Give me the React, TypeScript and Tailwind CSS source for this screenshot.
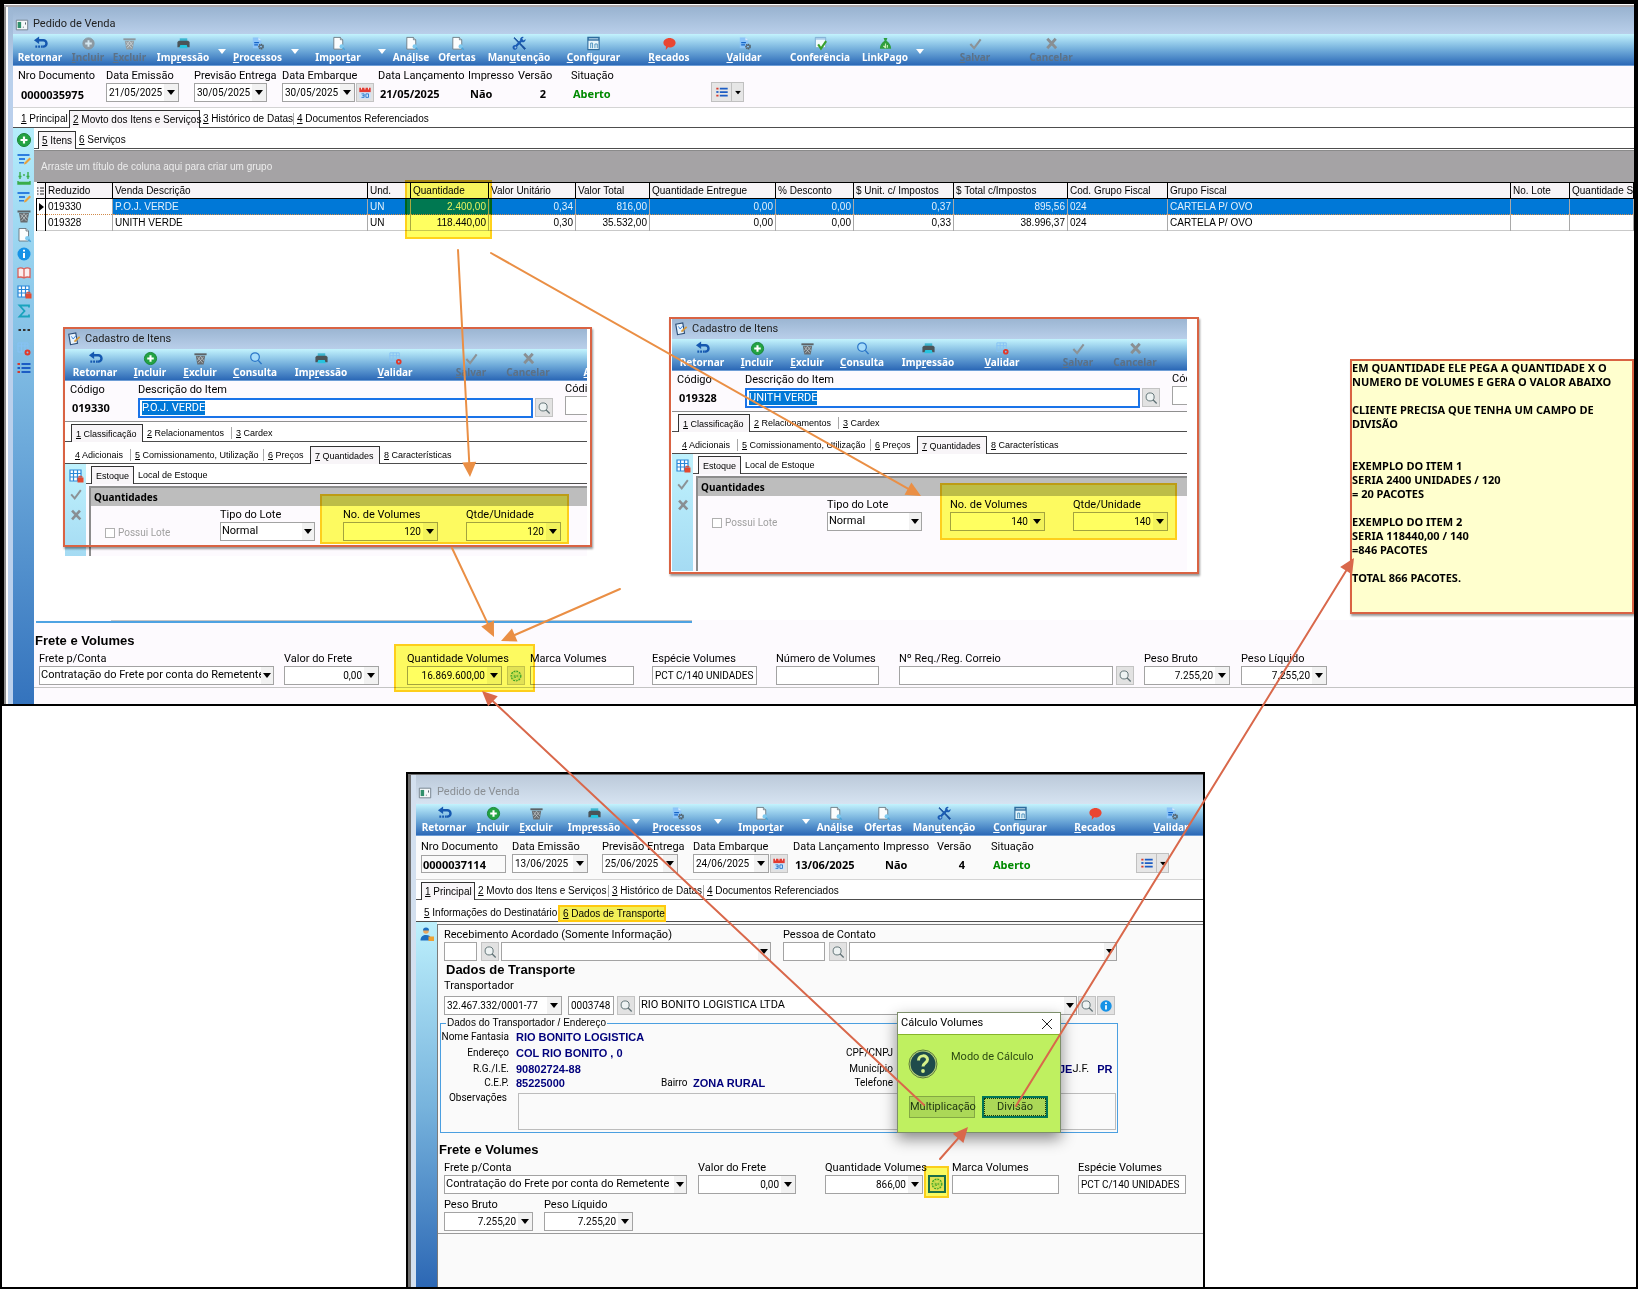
import { Fragment, useId } from 'react';
import type { ReactNode } from 'react';
import clsx from 'clsx';

type IconName =
  | 'undo' | 'plus' | 'plusOff' | 'trash' | 'trashOff' | 'printer' | 'docGear' | 'page' | 'tools' | 'config'
  | 'bubble' | 'docCheck' | 'money' | 'check' | 'cross' | 'search' | 'gridGear' | 'edit' | 'fit' | 'info'
  | 'book' | 'gridLock' | 'sigma' | 'dots' | 'list' | 'calendar' | 'person' | 'lens' | 'app' | 'notepad' | 'gear';

const icons: Record<IconName, ReactNode> = {
  undo: (
    <>
      <path d="M6.5 0.500v8L1 4.500z" fill="#1558b0" />
      <path d="M5 4.500h6a3.200 3.200 0 0 1 0 6.800h-1" fill="none" stroke="#1558b0" strokeWidth="2.600" />
      <path d="M2.500 11.300h7.500" stroke="#1558b0" strokeWidth="2.600" strokeDasharray="2 1" />
    </>
  ),
  plus: (
    <>
      <circle cx="8" cy="8" r="6.5" fill="#23a343" stroke="#178435" />
      <path d="M8 4.5v7M4.5 8h7" stroke="#fff" strokeWidth="2.2" />
    </>
  ),
  plusOff: (
    <>
      <circle cx="8" cy="8" r="6" fill="#8e9ba4" stroke="#87939b" />
      <path d="M8 4.5v7M4.5 8h7" stroke="#d5e8f1" strokeWidth="2" />
    </>
  ),
  trash: (
    <>
      <path d="M1.5 2.5h13v2h-13z" fill="#5c6266" />
      <path d="M3 5h10l-1.6 9.5H4.6z" fill="#676c70" />
      <path d="M4.5 6l6 7M8 5.5l3.5 5M11.5 6l-6 7M8 5.5l-3.3 5" stroke="#c3c9cc" strokeWidth="0.8" />
    </>
  ),
  trashOff: (
    <>
      <path d="M1.5 2.5h13v2h-13z" fill="#8d979d" />
      <path d="M3 5h10l-1.6 9.5H4.6z" fill="#939ca1" />
      <path d="M4.5 6l6 7M8 5.5l3.5 5M11.5 6l-6 7M8 5.5l-3.3 5" stroke="#d0d8dc" strokeWidth="0.8" />
    </>
  ),
  printer: (
    <>
      <path d="M4 2.5h8v4H4z" fill="#3bb5cf" />
      <path d="M1.500 6.500L3 5h10l1.500 1.500V12h-13z" fill="#4b5458" />
      <path d="M4.5 9.5h7l1 3.5h-9z" fill="#27c3de" />
    </>
  ),
  docGear: (
    <>
      <path d="M3 1.5h6l3 3V13H3z" fill="#8cc4f8" />
      <path d="M9 1.5l3 3H9z" fill="#d6ebfd" />
      <path d="M4.5 7h5M4.5 9.5h4" stroke="#1464c8" strokeWidth="1.4" />
      <circle cx="11.8" cy="11.3" r="2.3" fill="none" stroke="#53626c" strokeWidth="1.6" strokeDasharray="1.4 0.5" />
      <circle cx="11.8" cy="11.3" r="1.6" fill="none" stroke="#53626c" />
    </>
  ),
  page: (
    <>
      <path d="M3 1.5h7l2.5 2.5v10H3z" fill="#fbfdfe" stroke="#66747d" strokeWidth="0.9" />
      <path d="M10 1.5V4h2.5" fill="#d7e2e8" stroke="#66747d" strokeWidth="0.8" />
      <circle cx="11.5" cy="11.3" r="2.4" fill="#7fcaf0" />
      <path d="M12.5 12.5l2.2 2.2" stroke="#4ba3d8" strokeWidth="1.6" />
    </>
  ),
  tools: (
    <>
      <path d="M2 2.2l8.5 9 2.8 3.2 1.2-1.2-3-2.9L2.6 1.6z" fill="#174f9d" stroke="#174f9d" strokeWidth="0.8" />
      <path d="M14.5 3.2a3 3 0 0 1-4.2 3.2L5.6 11.2a2.6 2.6 0 1 1-1.8-1.6l4.9-5A3 3 0 0 1 12.6 1l-1.8 2 1.5 1.7z" fill="#1b5cb4" />
      <circle cx="3.7" cy="12.2" r="1" fill="#9bc4e8" />
    </>
  ),
  config: (
    <>
      <path d="M2 1.5h12v13H2z" fill="#e8f6fb" stroke="#2e6c9e" strokeWidth="1.2" />
      <path d="M2 1.5h12V5H2z" fill="#2e6c9e" />
      <path d="M3 3h10" stroke="#d0e8f5" />
      <path d="M5 13V7.5h2V13M9.5 13V8.5H12V13" fill="none" stroke="#4a90bd" />
    </>
  ),
  bubble: <path d="M8 2c3.6 0 6.5 2.3 6.5 5.1S11.600 12.200 8 12.200c-.5 0-1 0-1.500-.1L4 15l.2-3.800C2.600 10.300 1.500 8.800 1.500 7.100 1.500 4.300 4.400 2 8 2z" fill="#ea4632" />,
  docCheck: (
    <>
      <path d="M2.5 1.5h11v11h-11z" fill="#f3fafd" stroke="#73a8cf" />
      <path d="M3 2h10v2H3z" fill="#a9cdea" />
      <path d="M5.500 9l3 4.500 5.500-8" fill="none" stroke="#3aa02c" strokeWidth="2.200" />
    </>
  ),
  money: (
    <>
      <path d="M6 2h4l-1 3c3 2 5 5 5 8.500H2C2 10 4 7 7 5z" fill="#2f9e3d" />
      <path d="M5.500 11h1.500v1.500M8 8v5M10 9.500v3" stroke="#c9f0b8" strokeWidth="1.200" />
    </>
  ),
  check: <path d="M2.500 8.500l4 4.500 7-9.500" fill="none" stroke="#8c9296" strokeWidth="2.200" />,
  cross: <path d="M3.500 3l9.500 10M12.500 3l-9 10" fill="none" stroke="#898f93" strokeWidth="3" />,
  search: (
    <>
      <circle cx="7.500" cy="6.500" r="4.600" fill="#a6dcfa" stroke="#2b76c8" strokeWidth="1.300" />
      <path d="M11 10l3.500 4" stroke="#2b76c8" strokeWidth="1.600" />
    </>
  ),
  gridGear: (
    <>
      <path d="M2 2h10v9H2zM2 5h10M5.500 2v9M9 2v9" fill="none" stroke="#86c2f4" strokeWidth="1" />
      <circle cx="11.500" cy="11.500" r="2" fill="none" stroke="#e2392b" strokeWidth="2" />
    </>
  ),
  edit: (
    <>
      <path d="M1.500 3h12v2h-12zM3 7h6v2H3zM3 11h5v1.500H3z" fill="#2d7fe0" />
      <path d="M13.500 6.500l1.500 1.500-5 5-2 .5.500-2z" fill="#e9a13c" />
    </>
  ),
  fit: (
    <>
      <path d="M2 11v3h12v-3M2 12.500h12" fill="none" stroke="#39ad4a" strokeWidth="1.400" />
      <path d="M4 2v7M12 2v7M2.500 6.500h3M10.500 6.500h3M8 4v2" stroke="#39ad4a" strokeWidth="1.400" />
    </>
  ),
  info: (
    <>
      <circle cx="8" cy="8" r="6.500" fill="#1692e6" />
      <path d="M8 7v5M8 3.800v1.800" stroke="#fff" strokeWidth="2" />
    </>
  ),
  book: <path d="M2 3.500c2-.8 4-.8 6 .5 2-1.300 4-1.300 6-.5v9c-2-.8-4-.6-6 .5-2-1.100-4-1.300-6-.5zM8 4v9" fill="#fbeeee" stroke="#d9605a" strokeWidth="1.300" />,
  gridLock: (
    <>
      <path d="M2 2h11v11H2z" fill="#fff" />
      <path d="M2 2h11v11H2zM2 5.500h11M2 9h11M5.500 2v11M9.500 2v11" fill="none" stroke="#2a88d8" strokeWidth="1.200" />
      <path d="M9.500 9.500h6v5h-6z" fill="#e4492f" />
      <path d="M11 9.500V8.300h3v1.200" fill="none" stroke="#e4492f" />
    </>
  ),
  sigma: <path d="M13 4.500V2.500H3.500L8.500 8l-5 5.500H13v-2" fill="none" stroke="#1aa3bd" strokeWidth="1.800" />,
  dots: <path d="M2.500 8h2.500M7 8h2.500M11.500 8h2.500" stroke="#333" strokeWidth="2.200" />,
  list: (
    <>
      <path d="M5.500 4h9M5.500 8h9M5.500 12h9" stroke="#1c5cc4" strokeWidth="2" />
      <path d="M1.500 4h2.500M1.500 12h2.500" stroke="#d63a2e" strokeWidth="2" />
      <path d="M1.500 8h2.500" stroke="#1c5cc4" strokeWidth="2" />
    </>
  ),
  calendar: (
    <>
      <path d="M1.500 2h13v12.500h-13z" fill="#cfe4fa" />
      <path d="M1.500 2h13v5h-13z" fill="#e33a30" />
      <path d="M4 1v3M8 1v3M12 1v3" stroke="#f4e4e4" strokeWidth="1.200" />
      <path d="M4 9h3v4H4M5 11h2M9 9h3v4H9z" fill="none" stroke="#2474c8" />
    </>
  ),
  person: (
    <>
      <circle cx="7" cy="4" r="2.800" fill="#e8a760" />
      <path d="M4 3.500a3 3 0 0 1 6 0z" fill="#1c6ec0" />
      <path d="M1.500 13.500c0-4 2.500-5.500 5.500-5.500s4 1 5 3v2.500z" fill="#1c6ec0" />
      <path d="M9.500 9.500h5.500v4.500H9.500z" fill="#eea134" />
    </>
  ),
  lens: (
    <>
      <circle cx="7" cy="6.800" r="4.600" fill="#eef3f3" stroke="#5f7175" strokeWidth="1.100" />
      <path d="M10.500 10.300l4 4" stroke="#5f7175" strokeWidth="1.400" />
    </>
  ),
  app: (
    <>
      <path d="M1.500 2.500h13v11h-13z" fill="#f5f8fa" stroke="#6b7a86" />
      <path d="M3 4.500h4v7H3z" fill="#2f8f6b" />
      <path d="M9 10.500h1M12 5v2.500" stroke="#44525c" />
    </>
  ),
  notepad: (
    <>
      <path d="M2 2.500L10 1l2 12-8 1.500z" fill="#e9f3fb" stroke="#2b4d78" strokeWidth="1.300" />
      <path d="M5 5l2 3 3-3.500" fill="none" stroke="#2d7fe0" />
      <path d="M14.500 5.500l-6 5.500" stroke="#d99a3a" strokeWidth="2" />
    </>
  ),
  gear: (
    <>
      <circle cx="8" cy="8" r="5.500" fill="none" stroke="#3aa35e" strokeWidth="1.500" strokeDasharray="2.200 1" />
      <circle cx="8" cy="8" r="4" fill="none" stroke="#8fd3a3" strokeWidth="0.800" />
      <path d="M6 6.500v3h2v-3M10 6.500v3" fill="none" stroke="#3aa35e" />
    </>
  ),
};

function Icon({ name, className = 'size-4' }: { name: IconName; className?: string }) {
  return <svg viewBox="0 0 16 16" className={clsx('shrink-0', className)} aria-hidden="true">{icons[name]}</svg>;
}

function Arrow({ className = 'text-black' }: { className?: string }) {
  return (
    <svg viewBox="0 0 8 5" className={clsx('h-[5px] w-2 shrink-0', className)} aria-hidden="true">
      <path d="M0 0h8L4 5z" fill="currentColor" />
    </svg>
  );
}

// "&" marks the keyboard mnemonic, as in the desktop forms
function Mnemonic({ text }: { text: string }) {
  const at = text.indexOf('&');
  if (at < 0) return <>{text}</>;
  return (
    <>
      {text.slice(0, at)}
      <span className="underline underline-offset-1">{text[at + 1]}</span>
      {text.slice(at + 2)}
    </>
  );
}

type Tool = { label?: string; icon?: IconName; w: string; off?: boolean };

function Toolbar({ tools }: { tools: Tool[] }) {
  return (
    <div className="flex h-8 shrink-0 overflow-hidden border-b border-[#6f9ed6] bg-linear-to-b from-[#c3f3fd] via-[#73aedb] to-[#2b68b6]">
      {tools.map((t, i) =>
        t.label ? (
          <button
            key={i}
            disabled={t.off}
            className={clsx(
              "flex shrink-0 flex-col items-center pt-[2px] font-['Noto_Sans',sans-serif] text-[10px] leading-3 font-bold whitespace-nowrap",
              t.off ? 'text-[#5c7186]' : 'text-white',
              t.w,
            )}
          >
            {t.icon ? <Icon name={t.icon} className="size-[15px]" /> : <span className="h-[15px]" />}
            <span><Mnemonic text={t.label} /></span>
          </button>
        ) : (
          <button key={i} aria-label="Mais opções" className={clsx('flex shrink-0 items-center justify-center pt-1', t.w)}>
            <Arrow className="text-white" />
          </button>
        ),
      )}
    </div>
  );
}

type Tab = { label: string; w: string; active?: boolean; sep?: boolean; marked?: boolean };

function Tabs({ tabs, className, small }: { tabs: Tab[]; className?: string; small?: boolean }) {
  return (
    <div
      role="tablist"
      className={clsx(
        "flex shrink-0 items-end border-b border-[#4d4d4d] bg-white font-['Liberation_Sans',sans-serif] leading-3",
        small ? 'text-[9px]' : 'text-[10px]',
        className,
      )}
    >
      {tabs.map((t) => (
        <button
          key={t.label}
          role="tab"
          aria-selected={!!t.active}
          className={clsx(
            'relative h-[17px] shrink-0 text-left whitespace-nowrap',
            small ? 'pl-1' : 'pl-[3px]',
            t.active && !t.marked && '-mb-px h-[18px] border-x border-t border-[#333] bg-[#f8f5f8]',
            t.marked && '-mb-px h-5 border-2 border-[#ffc90e] bg-[#f2ef58]',
            t.w,
          )}
        >
          <Mnemonic text={t.label} />
          {t.sep && <span className="absolute top-[3px] right-0 h-3 w-px bg-[#a8a8a8]" />}
        </button>
      ))}
    </div>
  );
}

const box = 'h-[19px] border border-[#a3a3a3] bg-white';

function IconButton({ icon, label, className }: { icon: IconName; label: string; className?: string }) {
  return (
    <button aria-label={label} className={clsx('flex h-[19px] w-[18px] shrink-0 items-center justify-center border border-[#c3c3c3] bg-[#e2e2e2]', className)}>
      <Icon name={icon} className="size-[14px]" />
    </button>
  );
}

type Kind = 'text' | 'select' | 'spin' | 'date';
type FieldProps = { label: string; w: string; boxW: string; value?: string; kind?: Kind; extra?: ReactNode };

// One caption above one control; w is the column, boxW the control itself
function Field({ label, w, boxW, value = '', kind = 'text', extra }: FieldProps) {
  const id = useId();
  return (
    <div className={clsx('shrink-0', w)}>
      <label htmlFor={id} className="block h-[14px] leading-[14px] whitespace-nowrap">{label}</label>
      <div className="flex">
        <Control id={id} kind={kind} value={value} boxW={boxW} />
        {extra}
      </div>
    </div>
  );
}

function Control({ id, kind, value, boxW, label }: { id?: string; kind: Kind; value: string; boxW: string; label?: string }) {
  if (kind === 'select') {
    return (
      <div className={clsx('relative flex shrink-0 items-center', box, boxW)}>
        <select id={id} aria-label={label} defaultValue={value} className="h-full w-full appearance-none bg-transparent pl-px outline-none">
          <option value={value}>{value}</option>
        </select>
        <span className="pointer-events-none absolute inset-y-0 right-0 flex w-3 items-center justify-center bg-[#f2f2f2]">
          <Arrow />
        </span>
      </div>
    );
  }
  if (kind === 'text') {
    return <input id={id} aria-label={label} defaultValue={value} className={clsx('shrink-0 px-[2px] text-[10px] outline-none', box, boxW)} />;
  }
  return (
    <div className={clsx('flex shrink-0', box, boxW)}>
      <input
        id={id}
        aria-label={label}
        defaultValue={value}
        className={clsx('min-w-0 flex-1 bg-transparent px-[2px] text-[10px] outline-none', kind === 'spin' && 'text-right')}
      />
      <button aria-label="Abrir" className="flex w-[14px] shrink-0 items-center justify-center bg-[#f2f2f2]"><Arrow /></button>
    </div>
  );
}

const orderTop: Tool[] = [
  { label: 'Retornar', icon: 'undo', w: 'w-[54px]' },
  { label: '&Incluir', icon: 'plusOff', w: 'w-[42px]', off: true },
  { label: '&Excluir', icon: 'trashOff', w: 'w-[41px]', off: true },
  { label: 'Imp&ressão', icon: 'printer', w: 'w-[66px]' },
  { w: 'w-[12px]' },
  { label: '&Processos', icon: 'docGear', w: 'w-[59px]' },
  { w: 'w-[16px]' },
  { label: 'Impor&tar', icon: 'page', w: 'w-[70px]' },
  { w: 'w-[18px]' },
  { label: 'Aná&lise', icon: 'page', w: 'w-[40px]' },
  { label: 'Ofertas', icon: 'page', w: 'w-[52px]' },
  { label: 'Man&utenção', icon: 'tools', w: 'w-[72px]' },
  { label: '&Configurar', icon: 'config', w: 'w-[77px]' },
  { label: '&Recados', icon: 'bubble', w: 'w-[74px]' },
  { label: '&Validar', icon: 'docGear', w: 'w-[76px]' },
  { label: 'Conferência', icon: 'docCheck', w: 'w-[76px]' },
  { label: 'LinkPago', icon: 'money', w: 'w-[54px]' },
  { w: 'w-[16px]' },
  { label: '&Salvar', icon: 'check', w: 'w-[94px]', off: true },
  { label: 'Cancelar', icon: 'cross', w: 'w-[58px]', off: true },
];

const orderBottom: Tool[] = [
  { label: 'Retornar', icon: 'undo', w: 'w-[56px]' },
  { label: '&Incluir', icon: 'plus', w: 'w-[42px]' },
  { label: '&Excluir', icon: 'trash', w: 'w-[44px]' },
  { label: 'Imp&ressão', icon: 'printer', w: 'w-[72px]' },
  { w: 'w-[12px]' },
  { label: '&Processos', icon: 'docGear', w: 'w-[70px]' },
  { w: 'w-[12px]' },
  { label: 'Impor&tar', icon: 'page', w: 'w-[74px]' },
  { w: 'w-[15px]' },
  { label: 'Aná&lise', icon: 'page', w: 'w-[44px]' },
  { label: 'Ofertas', icon: 'page', w: 'w-[52px]' },
  { label: 'Man&utenção', icon: 'tools', w: 'w-[70px]' },
  { label: '&Configurar', icon: 'config', w: 'w-[82px]' },
  { label: '&Recados', icon: 'bubble', w: 'w-[68px]' },
  { label: '&Validar', icon: 'docGear', w: 'w-[84px]' },
];

const itemTools: Tool[] = [
  { label: 'Retornar', icon: 'undo', w: 'w-[60px]' },
  { label: '&Incluir', icon: 'plus', w: 'w-[50px]' },
  { label: '&Excluir', icon: 'trash', w: 'w-[50px]' },
  { label: '&Consulta', icon: 'search', w: 'w-[60px]' },
  { label: 'Imp&ressão', icon: 'printer', w: 'w-[72px]' },
  { label: '&Validar', icon: 'gridGear', w: 'w-[76px]' },
  { label: '&Salvar', icon: 'check', w: 'w-[76px]', off: true },
  { label: 'Cancelar', icon: 'cross', w: 'w-[38px]', off: true },
  { label: '&A', w: 'w-[80px]' },
];

type HeaderProps = {
  slots: string[];
  dateW: string;
  numero: ReactNode;
  datas: [string, string, string];
  lancamento: string;
  versao: string;
  className: string;
};

function OrderHeader({ slots, dateW, numero, datas, lancamento, versao, className }: HeaderProps) {
  const bold = "h-[19px] font-['Noto_Sans',sans-serif] text-[11px] leading-[22px] font-bold whitespace-nowrap";
  return (
    <div className={clsx('flex border-b border-[#d4d4d4] pl-[5px]', className)}>
      <div className={clsx('shrink-0', slots[0])}>
        <div className="h-[14px] leading-[14px]">Nro Documento</div>
        {numero}
      </div>
      <Field label="Data Emissão" kind="date" value={datas[0]} w={slots[1]} boxW={dateW} />
      <Field label="Previsão Entrega" kind="date" value={datas[1]} w={slots[2]} boxW={dateW} />
      <Field
        label="Data Embarque"
        kind="date"
        value={datas[2]}
        w={slots[3]}
        boxW={dateW}
        extra={<IconButton icon="calendar" label="Calendário" className="ml-px" />}
      />
      <div className={clsx('shrink-0', slots[4])}>
        <div className="h-[14px] leading-[14px] whitespace-nowrap">Data Lançamento</div>
        <div className={clsx(bold, 'pl-[2px]')}>{lancamento}</div>
      </div>
      <div className={clsx('shrink-0', slots[5])}>
        <div className="h-[14px] leading-[14px]">Impresso</div>
        <div className={clsx(bold, 'pl-[2px]')}>Não</div>
      </div>
      <div className={clsx('shrink-0', slots[6])}>
        <div className="h-[14px] leading-[14px]">Versão</div>
        <div className={clsx(bold, 'w-[28px] text-right')}>{versao}</div>
      </div>
      <div className={clsx('shrink-0', slots[7])}>
        <div className="h-[14px] leading-[14px]">Situação</div>
        <div className={clsx(bold, 'pl-[2px] text-[#008a00]')}>Aberto</div>
      </div>
      <div className="mt-[13px] flex h-5">
        <button aria-label="Lista" className="flex w-[21px] items-center justify-center border border-[#c0c0c0] bg-[#e6e6e6]"><Icon name="list" className="size-[14px]" /></button>
        <button aria-label="Opções" className="flex w-[12px] items-center justify-center border border-l-0 border-[#c0c0c0] bg-[#e6e6e6]"><Arrow className="scale-75 text-black" /></button>
      </div>
    </div>
  );
}

const columns = [
  { title: 'Reduzido', w: 'w-[67px]', cells: ['019330', '019328'] },
  { title: 'Venda Descrição', w: 'w-[255px]', cells: ['P.O.J. VERDE', 'UNITH VERDE'] },
  { title: 'Und.', w: 'w-[43px]', cells: ['UN', 'UN'] },
  { title: 'Quantidade', w: 'w-[78px]', num: true, cells: ['2.400,00', '118.440,00'] },
  { title: 'Valor Unitário', w: 'w-[87px]', num: true, cells: ['0,34', '0,30'] },
  { title: 'Valor Total', w: 'w-[74px]', num: true, cells: ['816,00', '35.532,00'] },
  { title: 'Quantidade Entregue', w: 'w-[126px]', num: true, cells: ['0,00', '0,00'] },
  { title: '% Desconto', w: 'w-[78px]', num: true, cells: ['0,00', '0,00'] },
  { title: '$ Unit. c/ Impostos', w: 'w-[100px]', num: true, cells: ['0,37', '0,33'] },
  { title: '$ Total c/Impostos', w: 'w-[114px]', num: true, cells: ['895,56', '38.996,37'] },
  { title: 'Cod. Grupo Fiscal', w: 'w-[100px]', cells: ['024', '024'] },
  { title: 'Grupo Fiscal', w: 'w-[343px]', cells: ['CARTELA P/ OVO', 'CARTELA P/ OVO'] },
  { title: 'No. Lote', w: 'w-[59px]', cells: ['', ''] },
  { title: 'Quantidade S', w: 'w-auto', cells: ['', ''] },
];

function ItemsTable() {
  return (
    <table className="w-full table-fixed border-collapse font-['Liberation_Sans',sans-serif] text-[10px] leading-[15px]">
      <thead>
        <tr className="h-4 border-y border-black bg-[#f7f4f7]">
          <th aria-label="Indicador" className="w-[9px] border-r border-black p-0">
            <svg viewBox="0 0 7 8" className="mx-auto h-2 w-[7px]">
              <path d="M0 1h1.500M0 4h1.500M0 7h1.500M3 1h4M3 4h4M3 7h4" stroke="#222" />
            </svg>
          </th>
          {columns.map((c) => (
            <th key={c.title} className={clsx('border-r border-black p-0 pl-[2px] text-left font-normal whitespace-nowrap', c.w)}>{c.title}</th>
          ))}
        </tr>
      </thead>
      <tbody>
        {[0, 1].map((r) => (
          <tr key={r} className={clsx('h-4 border-b', r === 0 ? 'border-dotted border-[#d18b4a] bg-[#0078d7] text-[#e4f1fb]' : 'border-[#c9c9c9]')}>
            <td className="border-r border-l border-black bg-white p-0 text-black">
              {r === 0 && <svg viewBox="0 0 5 8" className="mx-auto h-2 w-[5px]"><path d="M0 0v8l5-4z" /></svg>}
            </td>
            {columns.map((c, i) => (
              <td
                key={c.title}
                className={clsx('border-r border-[#a9a9a9] p-0 px-[2px] whitespace-nowrap', c.num && 'text-right', i === 0 && r === 0 && 'bg-white text-black')}
              >
                {c.cells[r]}
              </td>
            ))}
          </tr>
        ))}
      </tbody>
    </table>
  );
}

const sideIcons: IconName[] = ['plus', 'edit', 'fit', 'edit', 'trash', 'page', 'info', 'book', 'gridLock', 'sigma', 'dots', 'gridGear', 'list'];

function OrderWindow() {
  return (
    <section className="border-2 border-black bg-white">
      <div className="h-px bg-white" />
      <div className="h-[2px] bg-[#a9a6a9]" />
      <div className="flex">
        <div className="w-[2px] bg-[#8d8d8d]" />
        <div className="w-[2px] bg-white" />
        <div className="w-[5px] bg-linear-to-b from-[#9cb6d3] to-[#bad0ec] to-10%" />
        <div className="flex min-w-0 flex-1 flex-col">
          <h1 className="flex h-[27px] items-center gap-1 bg-linear-to-b from-[#99b3d0] to-[#b9cfea] pt-2 pl-[2px] text-[#222]">
            <Icon name="app" className="size-[14px]" />
            Pedido de Venda
          </h1>
          <Toolbar tools={orderTop} />
          <OrderHeader
            className="h-[42px] bg-[#fdfafe] pt-[3px]"
            slots={['w-[88px]', 'w-[88px]', 'w-[88px]', 'w-[96px]', 'w-[90px]', 'w-[50px]', 'w-[53px]', 'w-[140px]']}
            dateW="w-[73px]"
            numero={<div className="pl-[3px] font-['Noto_Sans',sans-serif] text-[11px] leading-6 font-bold">0000035975</div>}
            datas={['21/05/2025', '30/05/2025', '30/05/2025']}
            lancamento="21/05/2025"
            versao="2"
          />
          <Tabs
            className="h-5 pl-[5px]"
            tabs={[
              { label: '&1 Principal', w: 'w-[51px]' },
              { label: '&2 Movto dos Itens e Serviços', w: 'w-[131px]', active: true },
              { label: '&3 Histórico de Datas', w: 'w-[94px]', sep: true },
              { label: '&4 Documentos Referenciados', w: 'w-[140px]' },
            ]}
          />
          <div className="flex">
            <nav className="flex w-[21px] shrink-0 flex-col items-center gap-[3px] bg-linear-to-b from-[#b5eefc] to-[#3473bd] pt-1">
              {sideIcons.map((name, i) => (
                <button key={i} aria-label={`Ação ${i + 1}`}><Icon name={name} className="size-4" /></button>
              ))}
            </nav>
            <main className="min-w-0 flex-1">
              <Tabs
                className="h-[21px] pl-1"
                tabs={[
                  { label: '&5 Itens', w: 'w-[38px]', active: true },
                  { label: '&6 Serviços', w: 'w-[60px]' },
                ]}
              />
              <div className="mt-px h-8 border-t border-[#8a8a8a] bg-[#a5a3a5] pt-[8px] pl-[7px] font-['Liberation_Sans',sans-serif] text-[10px] leading-4 text-[#ececec]">
                Arraste um título de coluna aqui para criar um grupo
              </div>
              <div className="h-[438px] overflow-hidden pl-[2px]"><ItemsTable /></div>
              <div className="bg-[#fdfafe] pb-4">
                <div className="ml-[2px] h-[3px] w-[656px] border-b-2 border-[#4ea2e2] pl-[75px]">
                  <div className="h-px bg-[#c6c6c6]" />
                </div>
                <h2 className="mt-[10px] pl-px font-['Liberation_Sans',sans-serif] text-[13px] leading-4 font-bold">Frete e Volumes</h2>
                <div className="mt-[3px] flex border-b border-[#c4c4c4] pb-[2px] pl-[5px]">
                  <Field label="Frete p/Conta" kind="select" value="Contratação do Frete por conta do Remetente" w="w-[245px]" boxW="w-[235px]" />
                  <Field label="Valor do Frete" kind="spin" value="0,00" w="w-[123px]" boxW="w-[95px]" />
                  <Field
                    label="Quantidade Volumes"
                    kind="spin"
                    value="16.869.600,00"
                    w="w-[123px]"
                    boxW="w-[95px]"
                    extra={<IconButton icon="gear" label="Calcular volumes" className="ml-[5px]" />}
                  />
                  <Field label="Marca Volumes" w="w-[122px]" boxW="w-[104px]" />
                  <Field label="Espécie Volumes" value="PCT C/140 UNIDADES" w="w-[124px]" boxW="w-[105px]" />
                  <Field label="Número de Volumes" w="w-[123px]" boxW="w-[103px]" />
                  <Field label="Nº Req./Reg. Correio" w="w-[245px]" boxW="w-[214px]" extra={<IconButton icon="lens" label="Pesquisar" className="ml-[3px]" />} />
                  <Field label="Peso Bruto" kind="spin" value="7.255,20" w="w-[97px]" boxW="w-[86px]" />
                  <Field label="Peso Líquido" kind="spin" value="7.255,20" w="w-[97px]" boxW="w-[86px]" />
                </div>
              </div>
            </main>
          </div>
        </div>
      </div>
    </section>
  );
}

function ItemWindow({ code, name, volumes, className }: { code: string; name: string; volumes: string; className: string }) {
  const id = useId();
  return (
    <section className={clsx('absolute flex flex-col overflow-hidden bg-[#fdfafe]', className)}>
      <h2 className="flex h-[22px] shrink-0 items-center gap-1 bg-linear-to-b from-[#99b3d0] to-[#b9cfea] pt-[2px] pl-[2px] text-[#222]">
        <Icon name="notepad" className="size-[14px]" />
        Cadastro de Itens
      </h2>
      <Toolbar tools={itemTools} />
      <div className="flex h-[41px] shrink-0 border-b border-[#8f8f8f] pt-px pl-[5px]">
        <div className="w-[68px] shrink-0">
          <div className="leading-4">Código</div>
          <div className="pl-[2px] font-['Noto_Sans',sans-serif] text-[11px] leading-5 font-bold">{code}</div>
        </div>
        <div className="w-[427px] shrink-0">
          <label htmlFor={id} className="block leading-4">Descrição do Item</label>
          <div className="flex">
            <div className="flex h-5 w-[395px] items-center border-2 border-[#1a73e8] bg-white px-[2px]">
              <input id={id} defaultValue={name} size={name.length} className="field-sizing-content bg-[#0078d7] leading-[14px] text-white outline-none" />
            </div>
            <IconButton icon="lens" label="Pesquisar" className="ml-[2px]" />
          </div>
        </div>
        <Field label="Código" w="w-[90px]" boxW="w-[80px]" />
      </div>
      <Tabs
        small
        className="h-5 pl-[6px]"
        tabs={[
          { label: '&1 Classificação', w: 'w-[72px]', active: true },
          { label: '&2 Relacionamentos', w: 'w-[89px]', sep: true },
          { label: '&3 Cardex', w: 'w-[60px]' },
        ]}
      />
      <Tabs
        small
        className="h-[22px] pl-[6px]"
        tabs={[
          { label: '&4 Adicionais', w: 'w-[60px]', sep: true },
          { label: '&5 Comissionamento, Utilização', w: 'w-[133px]', sep: true },
          { label: '&6 Preços', w: 'w-[46px]' },
          { label: '&7 Quantidades', w: 'w-[70px]', active: true },
          { label: '&8 Características', w: 'w-[90px]' },
        ]}
      />
      <div className="flex flex-1">
        <nav className="flex w-[21px] shrink-0 flex-col items-center gap-[3px] bg-linear-to-b from-[#bff2fd] to-[#a5dbf3] pt-[4px]">
          <Icon name="gridLock" />
          <Icon name="check" className="size-[14px]" />
          <Icon name="cross" className="mt-1 size-[14px]" />
        </nav>
        <div className="min-w-0 flex-1">
          <Tabs
            small
            className="h-5 pl-[5px]"
            tabs={[
              { label: 'Estoque', w: 'w-[43px]', active: true },
              { label: 'Local de Estoque', w: 'w-[90px]' },
            ]}
          />
          <div className="mt-[2px] ml-[3px] h-full border-t-2 border-l-2 border-[#8c8c8c]">
            <h3 className="h-[18px] bg-[#bdbdbd] pl-[3px] font-['Noto_Sans',sans-serif] text-[10px] leading-[18px] font-bold">Quantidades</h3>
            <div className="flex pt-[2px]">
              <label className="flex w-[129px] shrink-0 items-center gap-[3px] pt-4 pl-[14px] text-[10px] text-[#a0a0a0]">
                <input type="checkbox" disabled className="size-[10px] appearance-none border border-[#b0b0b0] bg-white" />
                Possui Lote
              </label>
              <Field label="Tipo do Lote" kind="select" value="Normal" w="w-[123px]" boxW="w-[95px]" />
              <Field label="No. de Volumes" kind="spin" value={volumes} w="w-[123px]" boxW="w-[95px]" />
              <Field label="Qtde/Unidade" kind="spin" value={volumes} w="w-[123px]" boxW="w-[95px]" />
            </div>
          </div>
        </div>
      </div>
    </section>
  );
}

function AddressRow({ label, value, bairro, bairroValue, right, className, children }: {
  label: string; value: string; bairro?: string; bairroValue?: string; right?: string; className?: string; children?: ReactNode;
}) {
  const strong = "shrink-0 font-['Liberation_Sans',sans-serif] text-[11px] font-bold whitespace-nowrap text-[#00007c]";
  return (
    <div className={clsx('flex h-[14px] leading-[14px]', className)}>
      <span className="w-[68px] shrink-0 text-right whitespace-nowrap">{label}</span>
      <span className={clsx(strong, 'ml-[7px] w-[145px]')}>{value}</span>
      <span className="w-8 shrink-0">{bairro}</span>
      <span className={clsx(strong, 'w-[144px]')}>{bairroValue}</span>
      <span className="w-[56px] shrink-0 text-right">{right}</span>
      {children && <span className={clsx(strong, 'flex pl-[166px]')}>{children}</span>}
    </div>
  );
}

function TransportWindow() {
  return (
    <section className="mt-[66px] ml-[404px] flex w-[799px] flex-1 flex-col border-2 border-b-0 border-black bg-[#6e6e6e] pt-px pl-[3px]">
      <div className="flex flex-1 bg-[#d3e0ef] pl-[5px]">
        <div className="flex min-w-0 flex-1 flex-col">
          <h2 className="flex h-[29px] items-center gap-[5px] bg-linear-to-b from-[#bccada] to-[#d6e3f1] pt-[6px] pl-[2px] text-[#8a8f94]">
            <Icon name="app" className="size-[14px]" />
            Pedido de Venda
          </h2>
          <Toolbar tools={orderBottom} />
          <OrderHeader
            className="h-[44px] bg-[#fafafa] pt-[4px]"
            slots={['w-[91px]', 'w-[90px]', 'w-[91px]', 'w-[100px]', 'w-[90px]', 'w-[54px]', 'w-[54px]', 'w-[145px]']}
            dateW="w-[76px]"
            numero={
              <input
                aria-label="Nro Documento"
                defaultValue="0000037114"
                className="mt-px block h-[18px] w-[85px] border border-[#a3a3a3] bg-[#fafafa] px-px font-['Noto_Sans',sans-serif] text-[11px] font-bold outline-none"
              />
            }
            datas={['13/06/2025', '25/06/2025', '24/06/2025']}
            lancamento="13/06/2025"
            versao="4"
          />
          <Tabs
            className="h-5 pl-[5px]"
            tabs={[
              { label: '&1 Principal', w: 'w-[54px]', active: true },
              { label: '&2 Movto dos Itens e Serviços', w: 'w-[134px]', sep: true },
              { label: '&3 Histórico de Datas', w: 'w-[95px]', sep: true },
              { label: '&4 Documentos Referenciados', w: 'w-[140px]' },
            ]}
          />
          <Tabs
            className="h-[22px] pl-[5px]"
            tabs={[
              { label: '&5 Informações do Destinatário', w: 'w-[137px]' },
              { label: '&6 Dados de Transporte', w: 'w-[108px]', active: true, marked: true },
            ]}
          />
          <div className="flex flex-1 bg-[#fafafa]">
            <nav className="w-[21px] shrink-0 bg-linear-to-b from-[#bdf0fc] via-[#78b4dd] to-[#2c67b4] pt-[5px] pl-[3px]">
              <Icon name="person" />
            </nav>
            <div className="mt-[2px] min-w-0 flex-1 border-t border-l border-[#7a7a7a]">
              <div className="flex pt-[3px] pl-[6px]">
                <Field
                  label="Recebimento Acordado (Somente Informação)"
                  w="w-[339px]"
                  boxW="w-[33px]"
                  extra={
                    <>
                      <IconButton icon="lens" label="Pesquisar recebimento" className="mr-[2px] ml-1" />
                      <Control kind="select" value="" boxW="w-[270px]" label="Recebimento" />
                    </>
                  }
                />
                <Field
                  label="Pessoa de Contato"
                  w="w-[340px]"
                  boxW="w-[42px]"
                  extra={
                    <>
                      <IconButton icon="lens" label="Pesquisar contato" className="mr-[2px] ml-1" />
                      <Control kind="select" value="" boxW="w-[268px]" label="Contato" />
                    </>
                  }
                />
              </div>
              <h3 className="mt-px pl-[8px] font-['Liberation_Sans',sans-serif] text-[13px] leading-4 font-bold">Dados de Transporte</h3>
              <div className="mt-px pl-[6px] leading-[14px]">Transportador</div>
              <div className="mt-[3px] flex pl-[6px]">
                <Control kind="date" value="32.467.332/0001-77" boxW="w-[118px]" label="CNPJ do transportador" />
                <span className="w-[6px]" />
                <Control kind="text" value="0003748" boxW="w-[46px]" label="Código do transportador" />
                <IconButton icon="lens" label="Pesquisar transportador" className="mr-[4px] ml-[3px]" />
                <Control kind="select" value="RIO BONITO LOGISTICA LTDA" boxW="w-[438px]" label="Nome do transportador" />
                <IconButton icon="lens" label="Detalhar" className="ml-px" />
                <IconButton icon="info" label="Informações" className="ml-px" />
              </div>
              <fieldset className="mt-px ml-[2px] h-[117px] w-[678px] border border-[#4b9fe0] text-[10px]">
                <legend className="ml-[5px] bg-[#fafafa] px-px font-['Liberation_Sans',sans-serif] leading-[14px]">Dados do Transportador / Endereço</legend>
                <AddressRow label="Nome Fantasia" value="RIO BONITO LOGISTICA" />
                <AddressRow className="mt-[2px]" label="Endereço" value="COL RIO BONITO , 0" right="CPF/CNPJ" />
                <AddressRow className="mt-[2px]" label="R.G./I.E." value="90802724-88" right="Município">
                  JE
                  <span className="font-['Roboto',sans-serif] font-normal text-black">J.F.</span>
                  <span className="pl-2">PR</span>
                </AddressRow>
                <AddressRow label="C.E.P." value="85225000" bairro="Bairro" bairroValue="ZONA RURAL" right="Telefone" />
                <div className="mt-[2px] flex">
                  <label htmlFor="obs" className="w-[66px] text-right leading-3">Observações</label>
                  <textarea id="obs" className="mt-px ml-[11px] h-[37px] w-[598px] resize-none border border-[#bcbcbc] outline-none" />
                </div>
              </fieldset>
              <h3 className="mt-[9px] pl-px font-['Liberation_Sans',sans-serif] text-[13px] leading-4 font-bold">Frete e Volumes</h3>
              <div className="mt-[3px] flex pl-[6px]">
                <Field label="Frete p/Conta" kind="select" value="Contratação do Frete por conta do Remetente" w="w-[254px]" boxW="w-[243px]" />
                <Field label="Valor do Frete" kind="spin" value="0,00" w="w-[127px]" boxW="w-[98px]" />
                <Field
                  label="Quantidade Volumes"
                  kind="spin"
                  value="866,00"
                  w="w-[127px]"
                  boxW="w-[98px]"
                  extra={
                    <button aria-label="Calcular volumes" className="ml-[5px] flex size-[18px] items-center justify-center border-2 border-[#1b6fc0] bg-[#e2e2e2]">
                      <Icon name="gear" className="size-[14px]" />
                    </button>
                  }
                />
                <Field label="Marca Volumes" w="w-[126px]" boxW="w-[107px]" />
                <Field label="Espécie Volumes" value="PCT C/140 UNIDADES" w="w-[108px]" boxW="w-[108px]" />
              </div>
              <div className="mt-1 flex border-b border-[#9a9a9a] pb-[2px] pl-[6px]">
                <Field label="Peso Bruto" kind="spin" value="7.255,20" w="w-[100px]" boxW="w-[89px]" />
                <Field label="Peso Líquido" kind="spin" value="7.255,20" w="w-[100px]" boxW="w-[89px]" />
              </div>
            </div>
          </div>
        </div>
      </div>
    </section>
  );
}

function CalcDialog() {
  return (
    <div role="dialog" aria-label="Cálculo Volumes" className="absolute top-[1012px] left-[897px] w-[164px] border border-[#7d8f6a] bg-[#bff060] text-[#2b4a12] shadow-[0_6px_14px_rgba(0,0,0,0.45)]">
      <div className="flex h-[21px] items-center justify-between bg-white pr-2 pl-[3px] text-black">
        Cálculo Volumes
        <button aria-label="Fechar">
          <svg viewBox="0 0 10 10" className="size-[10px]"><path d="M0 0l10 10M10 0L0 10" stroke="#222" /></svg>
        </button>
      </div>
      <div className="flex h-[62px] border-t border-[#86b52c] pt-[14px] pl-[10px]">
        <svg viewBox="0 0 30 30" className="size-[30px]" aria-hidden="true">
          <circle cx="15" cy="15" r="14" fill="#bcd87e" stroke="#5d7c3a" />
          <circle cx="15" cy="15" r="12.500" fill="#1f4b4b" />
          <path d="M10.500 11.500c0-6 9-6 9-1 0 3.500-4.500 3.500-4.500 7" fill="none" stroke="#d6f08a" strokeWidth="3" />
          <circle cx="15" cy="22" r="1.900" fill="#d6f08a" />
        </svg>
        <p className="pl-[13px]">Modo de Cálculo</p>
      </div>
      <div className="flex gap-[7px] pb-[14px] pl-[11px]">
        <button className="h-[22px] w-[66px] border border-[#84a844] bg-[#abd857] text-[#1c3310]">Multiplicação</button>
        <button className="h-[22px] w-[66px] border-2 border-[#007558] bg-[#abd857] text-[#1c3310] outline-1 -outline-offset-3 outline-dotted">Divisão</button>
      </div>
    </div>
  );
}

const notes = [
  'EM QUANTIDADE ELE PEGA A QUANTIDADE X O',
  'NUMERO DE VOLUMES E GERA O VALOR ABAIXO',
  '',
  'CLIENTE PRECISA QUE TENHA UM CAMPO DE',
  'DIVISÃO',
  '',
  '',
  'EXEMPLO DO ITEM 1',
  'SERIA 2400 UNIDADES / 120',
  '= 20 PACOTES',
  '',
  'EXEMPLO DO ITEM 2',
  'SERIA 118440,00 / 140',
  '=846 PACOTES',
  '',
  'TOTAL 866 PACOTES.',
];

function StickyNote() {
  return (
    <aside className="absolute top-[359px] left-[1350px] h-[255px] w-[284px] border-2 border-[#d96343] bg-[#ffffce] font-['Noto_Sans',sans-serif] text-[11px] leading-[14px] font-bold whitespace-nowrap shadow-[1px_2px_2px_rgba(0,0,0,0.4)]">
      {notes.map((line, i) => (
        <Fragment key={i}>{line}<br /></Fragment>
      ))}
    </aside>
  );
}

const ORANGE = '#ea8f45';
const RED = '#d9684b';

const arrows: { from: [number, number]; to: [number, number]; color: string }[] = [
  { from: [458, 250], to: [470, 477], color: ORANGE },
  { from: [491, 253], to: [921, 496], color: ORANGE },
  { from: [452, 548], to: [494, 637], color: ORANGE },
  { from: [620, 589], to: [501, 641], color: ORANGE },
  { from: [924, 1105], to: [482, 691], color: RED },
  { from: [1016, 1106], to: [1354, 558], color: RED },
  { from: [940, 1159], to: [968, 1127], color: RED },
];

function Annotations() {
  return (
    <svg className="pointer-events-none absolute top-0 left-0 h-[1289px] w-[1638px]" viewBox="0 0 1638 1289" aria-hidden="true">
      {arrows.map(({ from, to, color }, i) => {
        const len = Math.hypot(to[0] - from[0], to[1] - from[1]);
        const ux = (to[0] - from[0]) / len;
        const uy = (to[1] - from[1]) / len;
        const bx = to[0] - ux * 15;
        const by = to[1] - uy * 15;
        return (
          <g key={i}>
            <line x1={from[0]} y1={from[1]} x2={bx} y2={by} stroke={color} strokeWidth="2" strokeLinecap="round" />
            <polygon points={`${to[0]},${to[1]} ${bx - uy * 7},${by + ux * 7} ${bx + uy * 7},${by - ux * 7}`} fill={color} />
          </g>
        );
      })}
    </svg>
  );
}

const marker = 'pointer-events-none absolute border-2 border-[#ffd21c] bg-[#ffff60] mix-blend-multiply';
const frame = 'pointer-events-none absolute border-2 border-[#d96343] shadow-[1px_2px_2px_rgba(0,0,0,0.4)]';

export default function App() {
  return (
    <div className="relative min-h-screen overflow-hidden bg-white font-['Roboto',sans-serif] text-[11px] text-black">
      <div className="flex min-h-screen flex-col border-2 border-black">
        <OrderWindow />
        <TransportWindow />
      </div>

      <ItemWindow code="019330" name="P.O.J. VERDE" volumes="120" className="top-[327px] left-[65px] h-[229px] w-[522px]" />
      <div className={clsx(frame, 'top-[327px] left-[63px] h-[220px] w-[529px]')} />
      <ItemWindow code="019328" name="UNITH VERDE" volumes="140" className="top-[317px] left-[672px] h-[254px] w-[515px]" />
      <div className={clsx(frame, 'top-[317px] left-[669px] h-[257px] w-[530px]')} />
      <StickyNote />
      <CalcDialog />

      <div className={clsx(marker, 'top-[180px] left-[405px] h-[59px] w-[87px]')} />
      <div className={clsx(marker, 'top-[494px] left-[320px] h-[50px] w-[249px]')} />
      <div className={clsx(marker, 'top-[483px] left-[940px] h-[57px] w-[237px]')} />
      <div className={clsx(marker, 'top-[644px] left-[394px] h-[48px] w-[141px]')} />
      <div className={clsx(marker, 'top-[1166px] left-[924px] h-8 w-[25px]')} />
      <Annotations />
    </div>
  );
}
